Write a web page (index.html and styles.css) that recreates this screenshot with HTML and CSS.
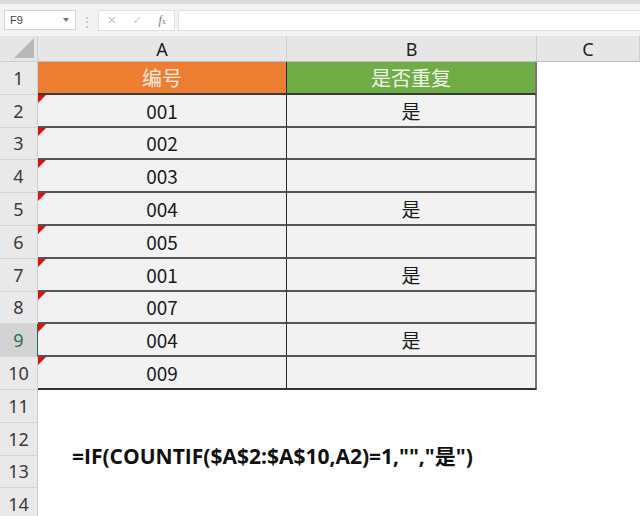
FILE: index.html
```html
<!DOCTYPE html>
<html lang="zh-CN">
<head>
    <meta charset="UTF-8" />
    <title>是否重复</title>
    <link rel="stylesheet" href="styles.css">
</head>
<body>

    <div class="toolbar">
        <div class="namebox">
            <span>F9</span>
            <span class="caret"></span>
        </div>
        <div class="dots">⋮</div>
        <div class="fx-buttons">
            <span>✕</span>
            <span>✓</span>
            <span class="fx"><i>f</i><small>x</small></span>
        </div>
        <div class="formula-input"></div>
    </div>

    <div class="sheet">
        <div class="grid">
            <div class="corner"><span class="corner-tri"></span></div>
            <div class="col-head">A</div>
            <div class="col-head">B</div>
            <div class="col-head">C</div>

            <div class="row-head">1</div>
            <div class="cell title orange">编号</div>
            <div class="cell title green">是否重复</div>
            <div class="cell blank"></div>

            <div class="row-head">2</div>
            <div class="cell data flag">001</div>
            <div class="cell data">是</div>
            <div class="cell blank"></div>

            <div class="row-head">3</div>
            <div class="cell data flag">002</div>
            <div class="cell data"></div>
            <div class="cell blank"></div>

            <div class="row-head">4</div>
            <div class="cell data flag">003</div>
            <div class="cell data"></div>
            <div class="cell blank"></div>

            <div class="row-head">5</div>
            <div class="cell data flag">004</div>
            <div class="cell data">是</div>
            <div class="cell blank"></div>

            <div class="row-head">6</div>
            <div class="cell data flag">005</div>
            <div class="cell data"></div>
            <div class="cell blank"></div>

            <div class="row-head">7</div>
            <div class="cell data flag">001</div>
            <div class="cell data">是</div>
            <div class="cell blank"></div>

            <div class="row-head">8</div>
            <div class="cell data flag">007</div>
            <div class="cell data"></div>
            <div class="cell blank"></div>

            <div class="row-head active">9</div>
            <div class="cell data flag">004</div>
            <div class="cell data">是</div>
            <div class="cell blank"></div>

            <div class="row-head">10</div>
            <div class="cell data flag last">009</div>
            <div class="cell data last"></div>
            <div class="cell blank"></div>

            <div class="row-head">11</div>
            <div class="cell empty"></div>
            <div class="cell empty"></div>
            <div class="cell empty"></div>

            <div class="row-head">12</div>
            <div class="cell empty"></div>
            <div class="cell empty"></div>
            <div class="cell empty"></div>

            <div class="row-head">13</div>
            <div class="cell empty"></div>
            <div class="cell empty"></div>
            <div class="cell empty"></div>

            <div class="row-head">14</div>
            <div class="cell empty"></div>
            <div class="cell empty"></div>
            <div class="cell empty"></div>
        </div>

        <!-- 文本框 -->
        <div class="formula-note">=IF(COUNTIF($A$2:$A$10,A2)=1,"","是")</div>
    </div>

</body>
</html>
```

FILE: styles.css
```css
body {
    margin: 0;
    width: 640px;
    height: 516px;
    overflow: hidden;
    background: #ffffff;
    font-family: "Noto Sans CJK SC", "Noto Sans", sans-serif;
    color: #222222;
}

.toolbar {
    height: 32px;
    border-top: 4px solid #dadada;
    background: #f3f3f3;
    display: flex;
    align-items: center;
    padding-left: 4px;
}

.namebox {
    width: 72px;
    height: 20px;
    background: #ffffff;
    border: 1px solid #d6d6d6;
    display: flex;
    align-items: center;
    justify-content: space-between;
    padding: 0 6px 0 5px;
    box-sizing: border-box;
    font-family: "Liberation Sans", sans-serif;
    font-size: 11px;
    color: #444444;
}

.caret {
    border-left: 3px solid transparent;
    border-right: 3px solid transparent;
    border-top: 4px solid #777777;
}

.dots {
    width: 22px;
    text-align: center;
    color: #b5b5b5;
    font-size: 12px;
}

.fx-buttons {
    width: 77px;
    height: 21px;
    box-sizing: border-box;
    background: #ffffff;
    border: 1px solid #e0e0e0;
    display: flex;
    align-items: center;
    justify-content: space-around;
    color: #c4c4c4;
    font-size: 11px;
    font-family: "DejaVu Sans", sans-serif;
}

.fx {
    color: #777777;
    font-family: "Liberation Serif", serif;
    font-size: 12px;
}

.fx small {
    font-size: 8px;
}

.formula-input {
    flex: 1;
    height: 21px;
    margin-left: 3px;
    background: #ffffff;
    border: 1px solid #e0e0e0;
    border-right: none;
    box-sizing: border-box;
}

.sheet {
    position: relative;
}

.grid {
    display: grid;
    grid-template-columns: 38px 249px 250px 103px;
    grid-template-rows: 26px repeat(14, 32.8px);
}

.corner {
    background: #e6e6e6;
    border-right: 1px solid #cfcfcf;
    border-bottom: 1px solid #cfcfcf;
    position: relative;
}

.corner-tri {
    position: absolute;
    right: 3px;
    bottom: 3px;
    border-left: 20px solid transparent;
    border-bottom: 20px solid #b8b8b8;
}

.col-head {
    background: #e6e6e6;
    border-right: 1px solid #cfcfcf;
    border-bottom: 1px solid #bdbdbd;
    display: flex;
    align-items: center;
    justify-content: center;
    font-family: "Noto Sans", sans-serif;
    font-size: 18px;
    color: #222222;
}

.row-head {
    background: #e9e9e9;
    border-right: 1px solid #cfcfcf;
    border-bottom: 1px solid #d4d4d4;
    display: flex;
    align-items: center;
    justify-content: center;
    font-family: "Noto Sans", sans-serif;
    font-size: 18px;
    color: #3a3a3a;
}

.row-head.active {
    background: #d3d3d3;
    color: #2f6e4a;
    border-right: 1px solid #217346;
}

.cell {
    display: flex;
    align-items: center;
    justify-content: center;
    font-size: 19px;
    position: relative;
}

.title {
    color: #fdeee4;
    font-size: 20px;
    border-bottom: 2px solid #3a3a3a;
}

.orange {
    background: #ed7d31;
    border-right: 1px solid #2a2a2a;
}

.green {
    background: #70ad47;
    color: #eef6e8;
    border-right: 2px solid #777777;
}

.data {
    background: #f2f2f2;
    border-bottom: 2px solid #555555;
    border-right: 1px solid #2a2a2a;
    color: #1a1a1a;
}

.data + .data {
    border-right: 2px solid #777777;
}

.data.last {
    border-bottom-color: #333333;
}

.flag::before {
    content: "";
    position: absolute;
    left: 0;
    top: 0;
    border-top: 8px solid #e01010;
    border-right: 8px solid transparent;
}

.blank,
.empty {
    background: #ffffff;
}

.formula-note {
    position: absolute;
    left: 72px;
    top: 404px;
    font-family: "Open Sans", "Noto Sans CJK SC", sans-serif;
    font-weight: bold;
    font-size: 21px;
    color: #111111;
    white-space: nowrap;
}
```
